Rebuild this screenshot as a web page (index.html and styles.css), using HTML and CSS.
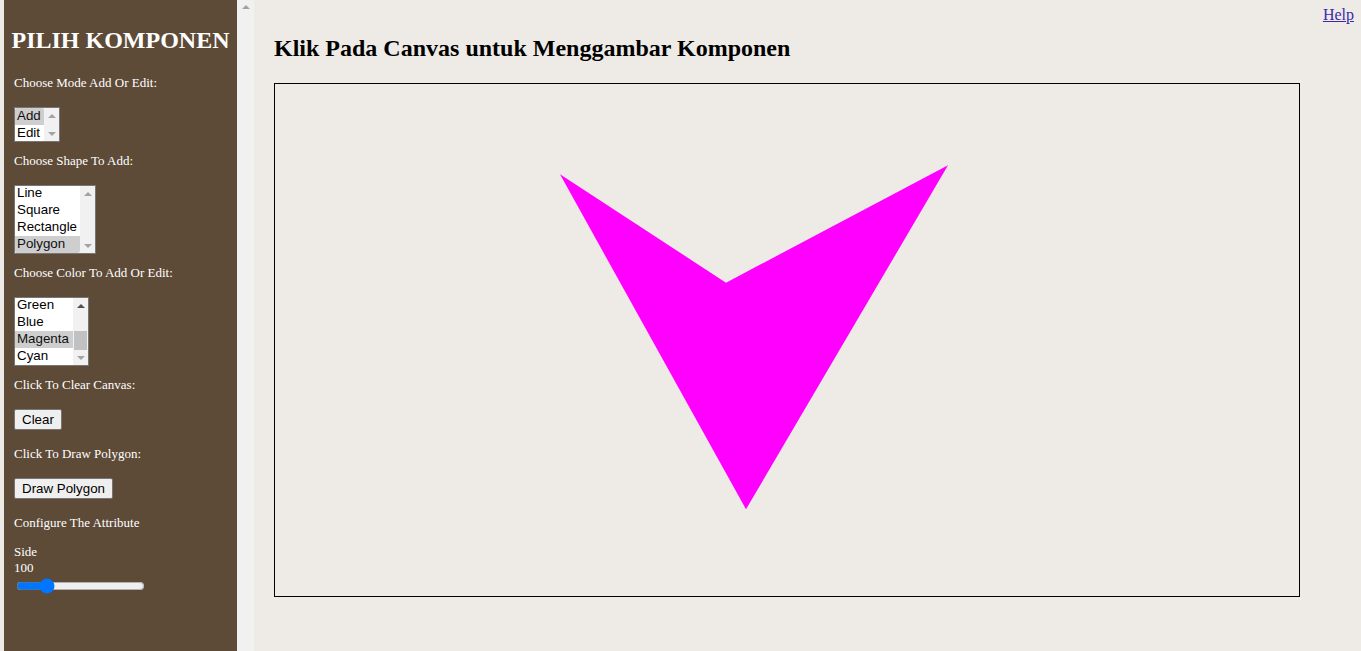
FILE: index.html
```html
<!DOCTYPE html>
<html lang="id">
<head>
<meta charset="utf-8">
<title>Pilih Komponen</title>
<link rel="stylesheet" href="styles.css">
</head>
<body>
<div class="layout">
  <aside class="sidebar">
    <div class="sidebar-content">
      <h1 class="sidebar-title">PILIH KOMPONEN</h1>

      <div class="label">Choose Mode Add Or Edit:</div>
      <div class="listbox-wrap mode-wrap">
        <select class="listbox" size="2">
          <option selected>Add</option>
          <option>Edit</option>
        </select>
        <div class="sb">
          <span class="sb-btn"><span class="tri-up off"></span></span>
          <span class="sb-track"></span>
          <span class="sb-btn"><span class="tri-down off"></span></span>
        </div>
      </div>

      <div class="label">Choose Shape To Add:</div>
      <div class="listbox-wrap shape-wrap">
        <select class="listbox" size="4">
          <option>Line</option>
          <option>Square</option>
          <option>Rectangle</option>
          <option selected>Polygon</option>
        </select>
        <div class="sb">
          <span class="sb-btn"><span class="tri-up off"></span></span>
          <span class="sb-track"></span>
          <span class="sb-btn"><span class="tri-down off"></span></span>
        </div>
      </div>

      <div class="label">Choose Color To Add Or Edit:</div>
      <div class="listbox-wrap color-wrap">
        <select class="listbox color-select" size="4">
          <option>Black</option>
          <option>Red</option>
          <option>Yellow</option>
          <option>Green</option>
          <option>Blue</option>
          <option selected>Magenta</option>
          <option>Cyan</option>
        </select>
        <div class="sb">
          <span class="sb-btn"><span class="tri-up"></span></span>
          <span class="sb-track"><span class="sb-thumb"></span></span>
          <span class="sb-btn"><span class="tri-down off"></span></span>
        </div>
      </div>

      <div class="label">Click To Clear Canvas:</div>
      <button class="btn" type="button">Clear</button>

      <div class="label">Click To Draw Polygon:</div>
      <button class="btn" type="button">Draw Polygon</button>

      <div class="label label-tight">Configure The Attribute</div>
      <div class="attr">
        <div class="attr-line">Side</div>
        <div class="attr-line">100</div>
        <input class="slider" type="range" min="0" max="500" value="100">
      </div>
    </div>
    <div class="fake-scrollbar"><span class="tri-up off"></span></div>
  </aside>

  <main class="main">
    <div class="help-row"><a class="help-link" href="#">Help</a></div>
    <h2 class="page-title">Klik Pada Canvas untuk Menggambar Komponen</h2>
    <div class="canvas">
      <svg class="canvas-svg" width="1024" height="512" viewBox="0 0 1024 512">
        <polygon points="285,90.3 451,198.7 673,81.3 471,425.3" fill="#ff00ff"/>
      </svg>
    </div>
  </main>
</div>
<script src="script.js"></script>
</body>
</html>
```

FILE: styles.css
```css
html, body {
  margin: 0;
  padding: 0;
  height: 100%;
}

body {
  background: #eeebe6;
  font-family: "Liberation Serif", "Times New Roman", serif;
  overflow: hidden;
}

.layout {
  display: flex;
  align-items: flex-start;
  height: 100vh;
}

.sidebar {
  display: flex;
  margin-left: 4px;
  width: 250px;
  height: 100vh;
  flex: none;
}

.sidebar-content {
  width: 233px;
  background: #5d4a37;
  color: #ffffff;
  padding-left: 10px;
  box-sizing: border-box;
  font-size: 13px;
  line-height: 16px;
}

.sidebar-title {
  margin: 27px 0 21px -10px;
  font-size: 24px;
  line-height: 27px;
  font-weight: bold;
  text-align: center;
  color: #ffffff;
}

.label {
  margin-bottom: 16px;
}

.label-tight {
  margin-bottom: 13px;
}

/* listbox with drawn classic scrollbar */
.listbox-wrap {
  display: flex;
  margin: 0 0 11px 0;
  border: 1px solid #767676;
  background: #fff;
  box-sizing: border-box;
}

.mode-wrap {
  width: 46px;
  height: 35px;
}

.shape-wrap {
  width: 82px;
  height: 69px;
}

.color-wrap {
  width: 75px;
  height: 69px;
}

.listbox {
  flex: 1;
  min-width: 0;
  height: 100%;
  margin: 0;
  padding: 0;
  border: none;
  outline: none;
  font-family: "Liberation Sans", Arial, sans-serif;
  font-size: 13.333px;
  color: #000;
  background: #fff;
  overflow: hidden;
}

.sb {
  width: 15px;
  flex: none;
  display: flex;
  flex-direction: column;
  background: #f1f1f1;
}

.sb-btn {
  height: 15px;
  flex: none;
  display: flex;
  align-items: center;
  justify-content: center;
}

.sb-track {
  flex: 1;
  display: flex;
  flex-direction: column;
  justify-content: flex-end;
  align-items: center;
}

.sb-thumb {
  width: 13px;
  height: 19px;
  background: #c1c1c1;
}

.tri-up,
.tri-down {
  width: 0;
  height: 0;
  border-left: 4px solid transparent;
  border-right: 4px solid transparent;
}

.tri-up {
  border-bottom: 4px solid #505050;
}

.tri-down {
  border-top: 4px solid #505050;
}

.tri-up.off {
  border-bottom-color: #a3a3a3;
}

.tri-down.off {
  border-top-color: #a3a3a3;
}

.btn {
  display: block;
  margin: 0 0 16px 0;
  font-family: "Liberation Sans", Arial, sans-serif;
  font-size: 13.333px;
  height: 21px;
  padding: 1px 7px;
  color: #000;
  background: #efefef;
  border: 1px solid #767676;
  border-radius: 2px;
  box-sizing: border-box;
}

.attr-line {
  line-height: 16px;
}

.slider {
  display: block;
  margin: 2px 2px;
  width: 129px;
}

.fake-scrollbar {
  width: 17px;
  background: #f1f1f1;
  display: flex;
  justify-content: center;
  align-items: flex-start;
  padding-top: 5px;
  box-sizing: border-box;
}

.main {
  flex: 1;
  margin-left: 20px;
  display: flex;
  flex-direction: column;
  align-items: flex-start;
}

.help-row {
  align-self: stretch;
  text-align: right;
  padding-top: 6px;
  padding-right: 7px;
  font-size: 16px;
  line-height: 18px;
}

.help-link {
  color: #3b2aa8;
  text-decoration: underline;
}

.page-title {
  margin: 11px 0 21px 0;
  font-size: 24px;
  line-height: 27px;
  font-weight: bold;
  color: #000;
}

.canvas {
  border: 1px solid #000;
  width: 1024px;
  height: 512px;
}

.canvas-svg {
  display: block;
}
```

FILE: script.js
```js
document.querySelectorAll('.color-select').forEach(function (el) {
  el.scrollTop = el.scrollHeight;
});
```
